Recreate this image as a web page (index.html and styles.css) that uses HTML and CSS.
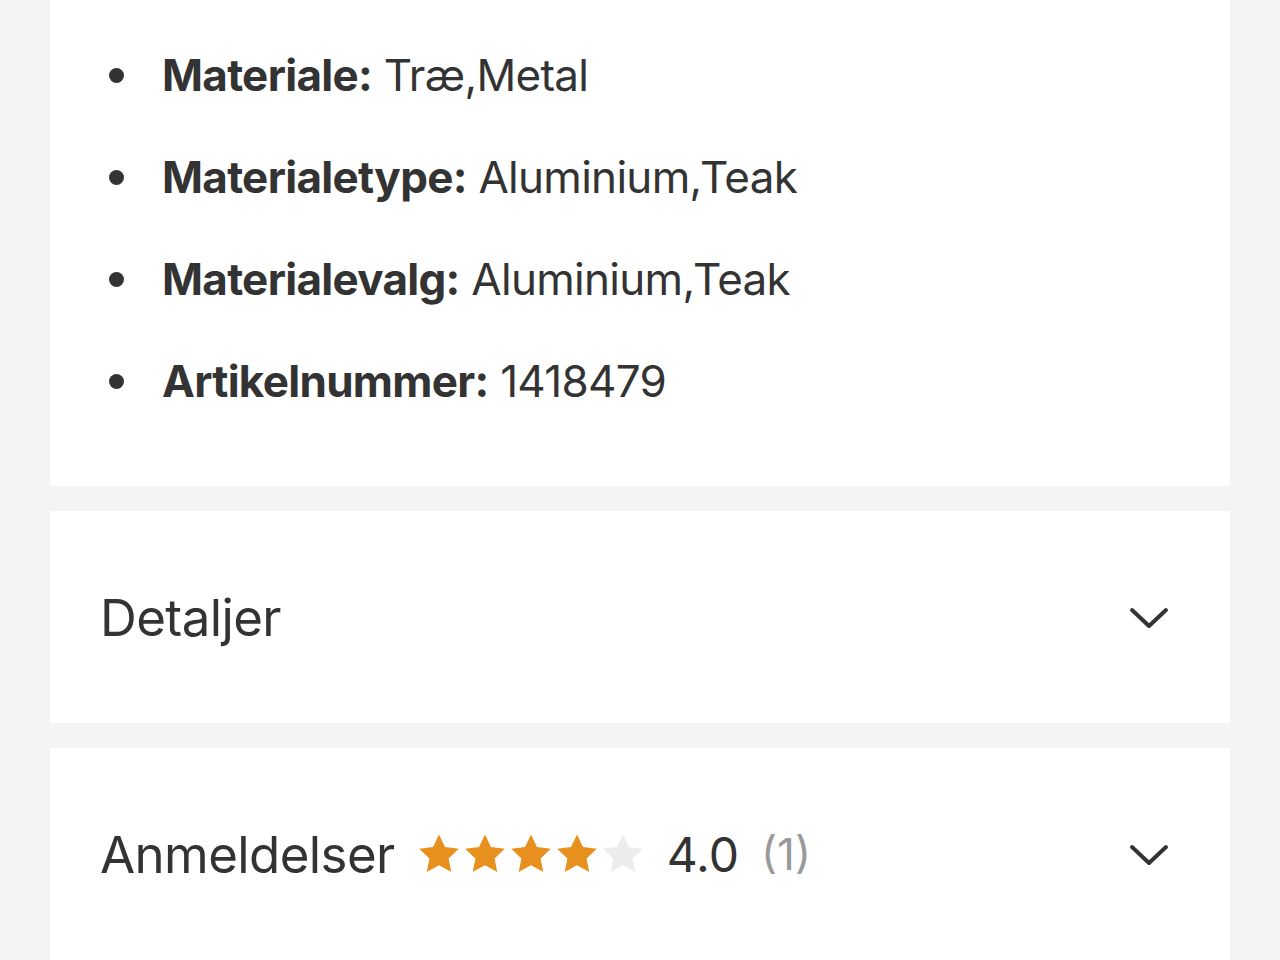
FILE: index.html
```html
<!DOCTYPE html>
<html lang="da">
<head>
<meta charset="utf-8">
<link rel="stylesheet" href="styles.css">
</head>
<body>
<div class="page">
  <section class="card specs">
    <ul class="spec-list">
      <li><span><b>Materiale:</b> Træ,Metal</span></li>
      <li><span><b>Materialetype:</b> Aluminium,Teak</span></li>
      <li><span><b>Materialevalg:</b> Aluminium,Teak</span></li>
      <li><span><b>Artikelnummer:</b> 1418479</span></li>
    </ul>
  </section>
  <section class="card accordion">
    <span class="acc-title">Detaljer</span>
    <svg class="chevron" viewBox="0 0 40 24" width="40" height="24"><path d="M3 5 L20 21 L37 5" fill="none" stroke="#333" stroke-width="4" stroke-linecap="round" stroke-linejoin="round"/></svg>
  </section>
  <section class="card accordion">
    <div class="acc-head">
      <span class="acc-title">Anmeldelser</span>
      <span class="stars">
        <svg class="star on" viewBox="0 0 24 24"><path d="M12 1.8l3.1 6.6 7.2.9-5.3 5 1.4 7.1L12 17.9l-6.4 3.5 1.4-7.1-5.3-5 7.2-.9z"/></svg>
        <svg class="star on" viewBox="0 0 24 24"><path d="M12 1.8l3.1 6.6 7.2.9-5.3 5 1.4 7.1L12 17.9l-6.4 3.5 1.4-7.1-5.3-5 7.2-.9z"/></svg>
        <svg class="star on" viewBox="0 0 24 24"><path d="M12 1.8l3.1 6.6 7.2.9-5.3 5 1.4 7.1L12 17.9l-6.4 3.5 1.4-7.1-5.3-5 7.2-.9z"/></svg>
        <svg class="star on" viewBox="0 0 24 24"><path d="M12 1.8l3.1 6.6 7.2.9-5.3 5 1.4 7.1L12 17.9l-6.4 3.5 1.4-7.1-5.3-5 7.2-.9z"/></svg>
        <svg class="star off" viewBox="0 0 24 24"><path d="M12 1.8l3.1 6.6 7.2.9-5.3 5 1.4 7.1L12 17.9l-6.4 3.5 1.4-7.1-5.3-5 7.2-.9z"/></svg>
      </span>
      <span class="score">4.0</span>
      <span class="count">(1)</span>
    </div>
    <svg class="chevron" viewBox="0 0 40 24" width="40" height="24"><path d="M3 5 L20 21 L37 5" fill="none" stroke="#333" stroke-width="4" stroke-linecap="round" stroke-linejoin="round"/></svg>
  </section>
</div>
</body>
</html>
```
FILE: styles.css
```css
html, body {
  margin: 0;
  padding: 0;
  background: #f4f4f4;
}
body {
  font-family: "Inter", "Open Sans", sans-serif;
  color: #333333;
  height: 960px;
  overflow: hidden;
}
.page {
  padding: 0 50px;
  display: flex;
  flex-direction: column;
  gap: 25px;
}
.card {
  background: #ffffff;
}
.specs {
  padding: 24px 0 54px;
}
.spec-list {
  margin: 0;
  padding: 0 0 0 59px;
  list-style: none;
  font-size: 44px;
  line-height: 102px;
  letter-spacing: -0.7px;
}
.spec-list li {
  display: flex;
  align-items: center;
  gap: 38px;
}
.spec-list li::before {
  content: "";
  width: 15px;
  height: 15px;
  border-radius: 50%;
  background: #333333;
  flex: none;
}
.spec-list b {
  font-weight: 700;
}
.accordion {
  height: 212px;
  padding: 0 50px;
  display: flex;
  align-items: center;
  justify-content: space-between;
}
.acc-head {
  display: flex;
  align-items: center;
  gap: 26px;
}
.acc-title {
  font-size: 51px;
  letter-spacing: -0.6px;
}
.stars {
  display: flex;
  gap: 0;
  margin-left: -5px;
  margin-right: -5px;
}
.star {
  width: 46px;
  height: 46px;
}
.star.on { fill: #e8901e; }
.star.off { fill: #ececec; }
.score {
  font-size: 48px;
}
.count {
  font-size: 44px;
  color: #9a9a9a;
  margin-left: -4px;
}
.chevron {
  margin-right: 11px;
}
```
